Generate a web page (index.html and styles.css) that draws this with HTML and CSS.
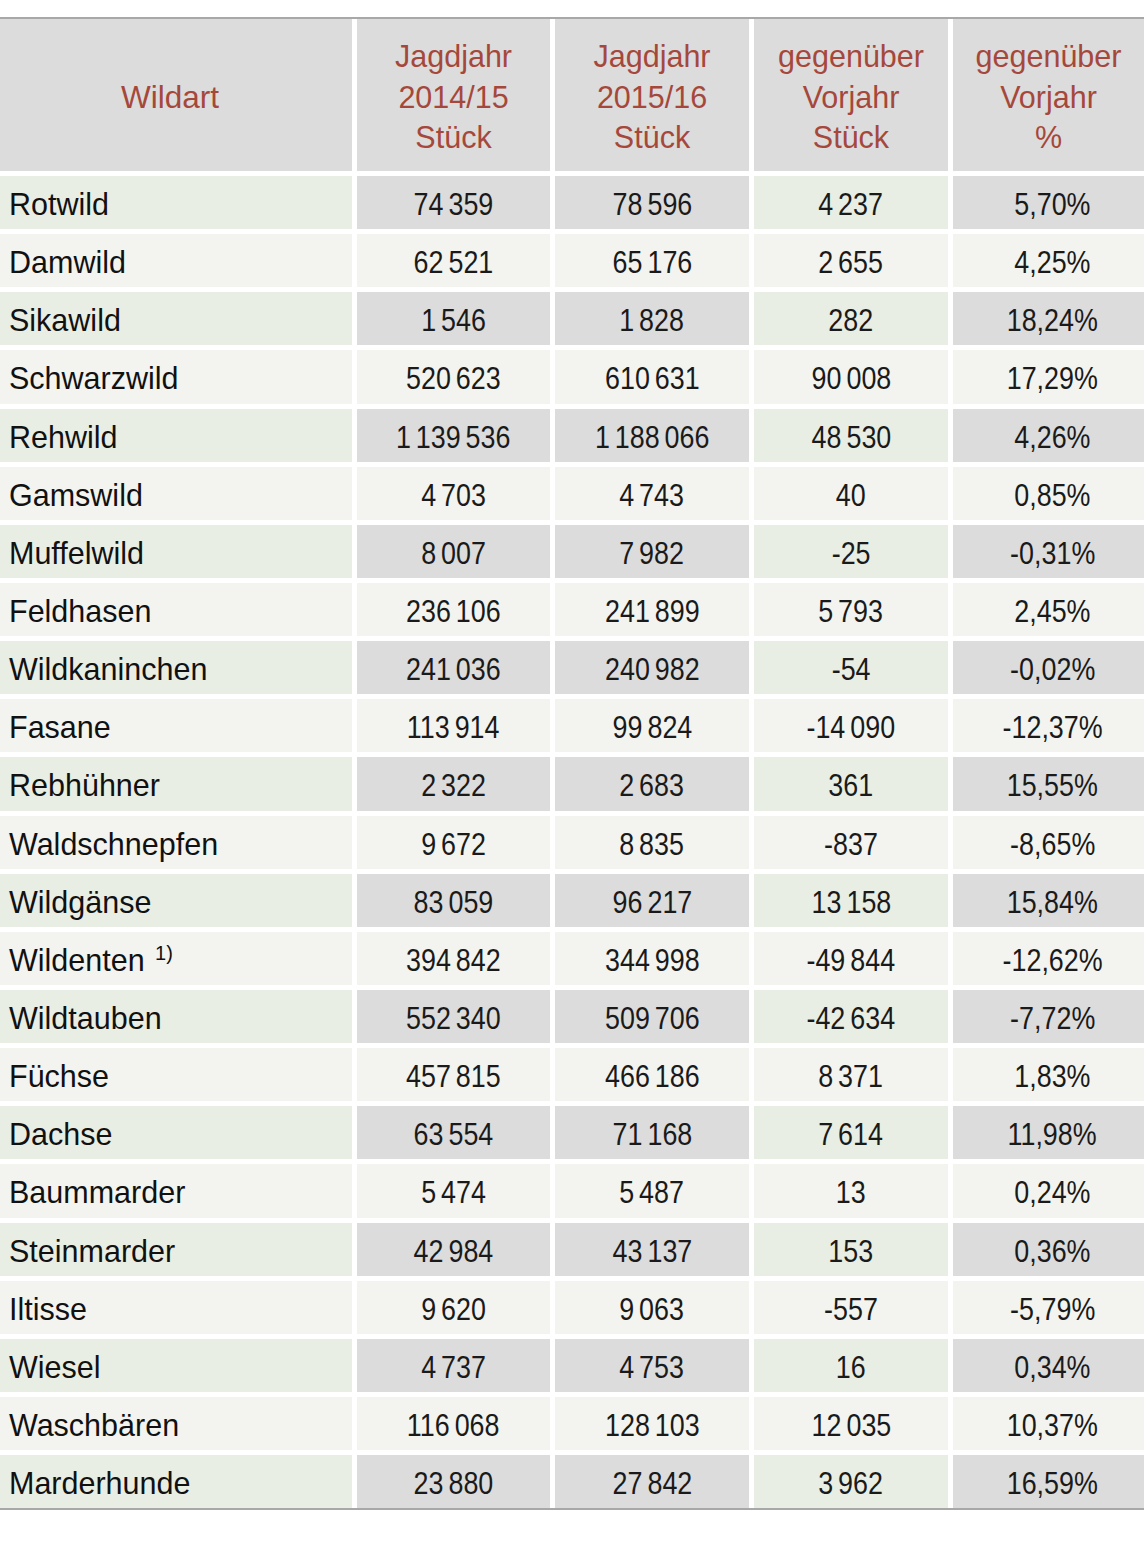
FILE: index.html
```html
<!DOCTYPE html>
<html lang="de">
<head>
<meta charset="utf-8">
<title>Jagdstrecke</title>
<link rel="stylesheet" href="styles.css">
</head>
<body>
<div class="table">
  <div class="row head">
    <div class="hc first">Wildart</div>
    <div class="hc">Jagdjahr<br>2014/15<br>Stück</div>
    <div class="hc">Jagdjahr<br>2015/16<br>Stück</div>
    <div class="hc">gegenüber<br>Vorjahr<br>Stück</div>
    <div class="hc">gegenüber<br>Vorjahr<br>%</div>
  </div>
  <div class="row odd"><div class="lab">Rotwild</div><div class="num"><span class="n">74 359</span></div><div class="num"><span class="n">78 596</span></div><div class="num"><span class="n">4 237</span></div><div class="num"><span class="n">5,70%</span></div></div>
  <div class="row even"><div class="lab">Damwild</div><div class="num"><span class="n">62 521</span></div><div class="num"><span class="n">65 176</span></div><div class="num"><span class="n">2 655</span></div><div class="num"><span class="n">4,25%</span></div></div>
  <div class="row odd"><div class="lab">Sikawild</div><div class="num"><span class="n">1 546</span></div><div class="num"><span class="n">1 828</span></div><div class="num"><span class="n">282</span></div><div class="num"><span class="n">18,24%</span></div></div>
  <div class="row even"><div class="lab">Schwarzwild</div><div class="num"><span class="n">520 623</span></div><div class="num"><span class="n">610 631</span></div><div class="num"><span class="n">90 008</span></div><div class="num"><span class="n">17,29%</span></div></div>
  <div class="row odd"><div class="lab">Rehwild</div><div class="num"><span class="n">1 139 536</span></div><div class="num"><span class="n">1 188 066</span></div><div class="num"><span class="n">48 530</span></div><div class="num"><span class="n">4,26%</span></div></div>
  <div class="row even"><div class="lab">Gamswild</div><div class="num"><span class="n">4 703</span></div><div class="num"><span class="n">4 743</span></div><div class="num"><span class="n">40</span></div><div class="num"><span class="n">0,85%</span></div></div>
  <div class="row odd"><div class="lab">Muffelwild</div><div class="num"><span class="n">8 007</span></div><div class="num"><span class="n">7 982</span></div><div class="num"><span class="n">-25</span></div><div class="num"><span class="n">-0,31%</span></div></div>
  <div class="row even"><div class="lab">Feldhasen</div><div class="num"><span class="n">236 106</span></div><div class="num"><span class="n">241 899</span></div><div class="num"><span class="n">5 793</span></div><div class="num"><span class="n">2,45%</span></div></div>
  <div class="row odd"><div class="lab">Wildkaninchen</div><div class="num"><span class="n">241 036</span></div><div class="num"><span class="n">240 982</span></div><div class="num"><span class="n">-54</span></div><div class="num"><span class="n">-0,02%</span></div></div>
  <div class="row even"><div class="lab">Fasane</div><div class="num"><span class="n">113 914</span></div><div class="num"><span class="n">99 824</span></div><div class="num"><span class="n">-14 090</span></div><div class="num"><span class="n">-12,37%</span></div></div>
  <div class="row odd"><div class="lab">Rebhühner</div><div class="num"><span class="n">2 322</span></div><div class="num"><span class="n">2 683</span></div><div class="num"><span class="n">361</span></div><div class="num"><span class="n">15,55%</span></div></div>
  <div class="row even"><div class="lab">Waldschnepfen</div><div class="num"><span class="n">9 672</span></div><div class="num"><span class="n">8 835</span></div><div class="num"><span class="n">-837</span></div><div class="num"><span class="n">-8,65%</span></div></div>
  <div class="row odd"><div class="lab">Wildgänse</div><div class="num"><span class="n">83 059</span></div><div class="num"><span class="n">96 217</span></div><div class="num"><span class="n">13 158</span></div><div class="num"><span class="n">15,84%</span></div></div>
  <div class="row even"><div class="lab"><span>Wildenten <sup class="fn">1)</sup></span></div><div class="num"><span class="n">394 842</span></div><div class="num"><span class="n">344 998</span></div><div class="num"><span class="n">-49 844</span></div><div class="num"><span class="n">-12,62%</span></div></div>
  <div class="row odd"><div class="lab">Wildtauben</div><div class="num"><span class="n">552 340</span></div><div class="num"><span class="n">509 706</span></div><div class="num"><span class="n">-42 634</span></div><div class="num"><span class="n">-7,72%</span></div></div>
  <div class="row even"><div class="lab">Füchse</div><div class="num"><span class="n">457 815</span></div><div class="num"><span class="n">466 186</span></div><div class="num"><span class="n">8 371</span></div><div class="num"><span class="n">1,83%</span></div></div>
  <div class="row odd"><div class="lab">Dachse</div><div class="num"><span class="n">63 554</span></div><div class="num"><span class="n">71 168</span></div><div class="num"><span class="n">7 614</span></div><div class="num"><span class="n">11,98%</span></div></div>
  <div class="row even"><div class="lab">Baummarder</div><div class="num"><span class="n">5 474</span></div><div class="num"><span class="n">5 487</span></div><div class="num"><span class="n">13</span></div><div class="num"><span class="n">0,24%</span></div></div>
  <div class="row odd"><div class="lab">Steinmarder</div><div class="num"><span class="n">42 984</span></div><div class="num"><span class="n">43 137</span></div><div class="num"><span class="n">153</span></div><div class="num"><span class="n">0,36%</span></div></div>
  <div class="row even"><div class="lab">Iltisse</div><div class="num"><span class="n">9 620</span></div><div class="num"><span class="n">9 063</span></div><div class="num"><span class="n">-557</span></div><div class="num"><span class="n">-5,79%</span></div></div>
  <div class="row odd"><div class="lab">Wiesel</div><div class="num"><span class="n">4 737</span></div><div class="num"><span class="n">4 753</span></div><div class="num"><span class="n">16</span></div><div class="num"><span class="n">0,34%</span></div></div>
  <div class="row even"><div class="lab">Waschbären</div><div class="num"><span class="n">116 068</span></div><div class="num"><span class="n">128 103</span></div><div class="num"><span class="n">12 035</span></div><div class="num"><span class="n">10,37%</span></div></div>
  <div class="row odd"><div class="lab">Marderhunde</div><div class="num"><span class="n">23 880</span></div><div class="num"><span class="n">27 842</span></div><div class="num"><span class="n">3 962</span></div><div class="num"><span class="n">16,59%</span></div></div>
</div>
</body>
</html>
```

FILE: styles.css
```css
html, body {
  margin: 0;
  padding: 0;
  background: #ffffff;
}

body {
  font-family: "Liberation Sans", Arial, sans-serif;
  color: #141414;
}

.table {
  margin-top: 17px;
  border-top: 2px solid #a8a8a8;
  border-bottom: 2px solid #a8a8a8;
  display: flex;
  flex-direction: column;
  gap: 5px;
  width: 1144px;
}

.row {
  display: grid;
  grid-template-columns: 352px 193px 194px 194px 1fr;
  column-gap: 5px;
  height: 53.15px;
}

.row.head {
  height: 152px;
}

.hc {
  background: #dcdcdc;
  color: #a5483b;
  font-size: 30.5px;
  line-height: 40.5px;
  text-align: center;
  display: flex;
  align-items: center;
  justify-content: center;
  padding-top: 4px;
  box-sizing: border-box;
}

.hc.first {
  font-size: 31.5px;
  padding-right: 12px;
}

.lab,
.num {
  display: flex;
  align-items: center;
  padding-top: 4px;
  box-sizing: border-box;
}

.lab {
  padding-left: 9px;
  color: #111111;
  white-space: nowrap;
  font-size: 30.5px;
}

.num {
  justify-content: center;
  font-size: 32px;
}

.num:nth-child(5) {
  padding-left: 8px;
}

.n {
  display: inline-block;
  white-space: nowrap;
  word-spacing: -3px;
  transform: scaleX(0.84);
  transform-origin: center;
  color: #1a1a1a;
}

.fn {
  font-size: 20px;
  vertical-align: baseline;
  position: relative;
  top: -11px;
  margin-left: 2px;
}

.odd .lab { background: #e9eee4; }
.odd .num { background: #dcdcdc; }
.odd .num:nth-child(4) { background: #e9eee4; }

.even .lab,
.even .num { background: #f3f4ef; }
```
